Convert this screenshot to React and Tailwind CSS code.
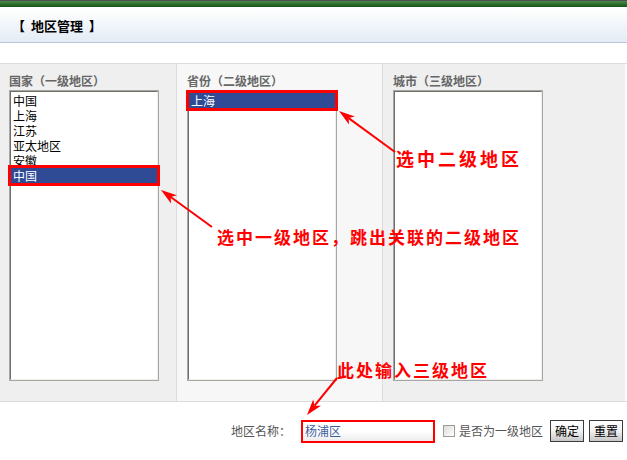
import React from "react";

const provinces = ["中国", "上海", "江苏", "亚太地区", "安徽", "中国"];

// arrow line with a narrow filled head at the tip
function Arrow({ x1, y1, x2, y2 }) {
  const dx = x2 - x1;
  const dy = y2 - y1;
  const len = Math.hypot(dx, dy);
  const ux = dx / len;
  const uy = dy / len;
  const px = -uy;
  const py = ux;
  const head = 16;
  const half = 5;
  const bx = x2 - ux * head;
  const by = y2 - uy * head;
  const nx = x2 - ux * (head - 4);
  const ny = y2 - uy * (head - 4);
  const pts = [
    [x2, y2],
    [bx + px * half, by + py * half],
    [nx, ny],
    [bx - px * half, by - py * half],
  ]
    .map((p) => p.join(","))
    .join(" ");
  return (
    <g>
      <line x1={x1} y1={y1} x2={nx} y2={ny} stroke="#ff0000" strokeWidth="2" />
      <polygon points={pts} fill="#ff0000" />
    </g>
  );
}

function ListBox({ items = [], selected = -1 }) {
  return (
    <div className="w-[150px] h-[291px] border border-[#a7a6aa] bg-white">
      <div className="h-full border border-t-[#716f64] border-l-[#716f64] border-r-[#f1efe2] border-b-[#f1efe2] pt-[1px]">
        {items.map((it, i) => (
          <div
            key={i}
            className={
              i === selected
                ? "h-[15px] leading-[15px] pl-[2px] bg-[#2f4b96] text-white outline-[3px] outline-solid outline-[#ff0000]"
                : "h-[15px] leading-[15px] pl-[2px] text-black"
            }
          >
            {it}
          </div>
        ))}
      </div>
    </div>
  );
}

function Column({ title, className, children }) {
  return (
    <div className={className}>
      <div className="leading-[14px] font-bold text-[#666666] mb-[2px]">{title}</div>
      {children}
    </div>
  );
}

export default function App() {
  return (
    <div className="relative w-[627px] h-[460px] overflow-hidden bg-white text-[12px] font-['SimSun','Noto_Sans_CJK_SC',sans-serif]">
      {/* top stripe */}
      <div className="h-[1px] bg-[#505050]" />
      <div className="h-[6px] bg-gradient-to-b from-[#4a8a4a] via-[#2f6f2f] to-[#175417]" />

      {/* title bar */}
      <div className="mt-[2px] h-[34px] border-b border-[#b8c8d8] bg-gradient-to-b from-white to-[#e3ebf5] flex items-center pl-[12px] text-[13px] font-bold text-black">
        【&nbsp;&nbsp;地区管理&nbsp;&nbsp;】
      </div>

      <div className="h-[20px]" />

      {/* region columns */}
      <div className="flex h-[339px] border-t border-b border-[#dcdcdc]">
        <Column
          title="国家（一级地区）"
          className="w-[177px] bg-[#efefef] border-r border-[#dcdcdc] pl-[9px] pt-[10px]"
        >
          <ListBox items={provinces} selected={5} />
        </Column>
        <Column
          title="省份（二级地区）"
          className="w-[206px] bg-[#f7f7f7] border-r border-[#dcdcdc] pl-[10px] pt-[10px]"
        >
          <ListBox items={["上海"]} selected={0} />
        </Column>
        <Column title="城市（三级地区）" className="w-[242px] bg-[#efefef] pl-[10px] pt-[10px]">
          <ListBox />
        </Column>
      </div>

      {/* form row */}
      <div className="flex items-center justify-end h-[58px] pr-[4px] text-[#555555]">
        <span className="mr-[10px]">地区名称：</span>
        <div className="w-[134px] h-[23px] border-2 border-[#ff0000] bg-gradient-to-b from-white via-white to-[#ececec] mr-[8px] flex items-center pl-[2px] text-[#3d5d9b]">
          杨浦区
        </div>
        <span className="w-[12px] h-[12px] border border-[#9c9c9c] bg-gradient-to-br from-[#dcdcd7] to-white mr-[4px]" />
        <span className="mr-[7px]">是否为一级地区</span>
        <button className="w-[34px] h-[22px] border border-[#3c3c3c] bg-gradient-to-b from-white via-[#f2f2f2] to-[#c6c6c6] text-black mr-[5px] leading-none">
          确定
        </button>
        <button className="w-[34px] h-[22px] border border-[#3c3c3c] bg-gradient-to-b from-white via-[#f2f2f2] to-[#c6c6c6] text-black leading-none">
          重置
        </button>
      </div>

      {/* callouts */}
      <svg className="absolute inset-0 pointer-events-none" width="627" height="460">
        <Arrow x1={395} y1={152} x2={339} y2={111} />
        <Arrow x1={212} y1={227} x2={161} y2={190} />
        <Arrow x1={337} y1={378} x2={307} y2={415} />
      </svg>
      <span className="absolute left-[396px] top-[147px] text-[18px] leading-[22px] tracking-[3px] font-bold text-[#ff0000] font-['Noto_Sans_CJK_SC',sans-serif]">
        选中二级地区
      </span>
      <span className="absolute left-[217px] top-[226px] text-[17px] leading-[22px] tracking-[2px] font-bold text-[#ff0000] font-['Noto_Sans_CJK_SC',sans-serif]">
        选中一级地区，跳出关联的二级地区
      </span>
      <span className="absolute left-[337px] top-[359px] text-[17px] leading-[22px] tracking-[2px] font-bold text-[#ff0000] font-['Noto_Sans_CJK_SC',sans-serif]">
        此处输入三级地区
      </span>
    </div>
  );
}
